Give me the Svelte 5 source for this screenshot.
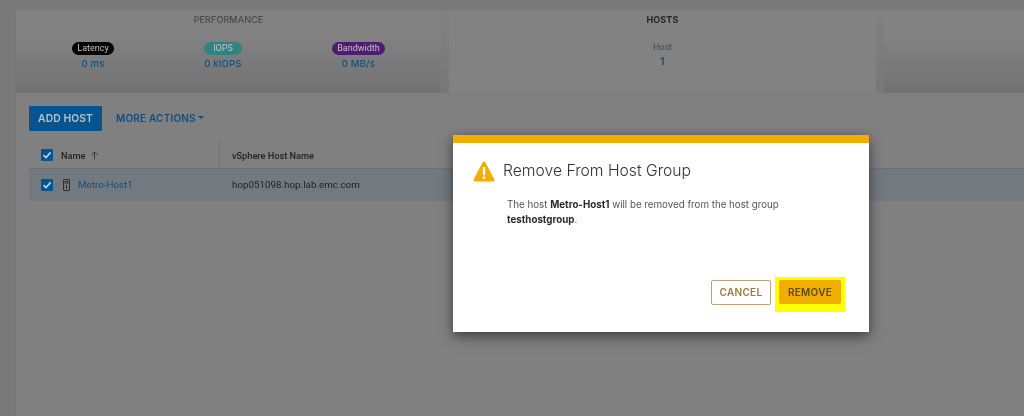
<script>
  const metrics = [
    { label: 'Latency', value: '0 ms', tone: 'black' },
    { label: 'IOPS', value: '0 kIOPS', tone: 'teal' },
    { label: 'Bandwidth', value: '0 MB/s', tone: 'purple' }
  ];
</script>

<div class="page">
  <div class="main">
    <div class="cards">
      <section class="card perf">
        <h3>PERFORMANCE</h3>
        <div class="metrics">
          {#each metrics as m}
            <div class="metric">
              <span class="pill {m.tone}">{m.label}</span>
              <span class="val">{m.value}</span>
            </div>
          {/each}
        </div>
      </section>
      <section class="card hosts">
        <h3>HOSTS</h3>
        <div class="host-stat">
          <span class="stat-label">Host</span>
          <span class="stat-val">1</span>
        </div>
      </section>
      <section class="card third"></section>
    </div>

    <div class="actions">
      <button class="primary">ADD HOST</button>
      <button class="link">MORE ACTIONS<span class="caret"></span></button>
    </div>

    <div class="table">
      <div class="thead">
        <div class="col-a">
          <span class="check"><svg viewBox="0 0 12 12"><path d="M2.5 6.2 5 8.6 9.6 3.4" /></svg></span>
          <span class="hname">Name</span>
          <svg class="arrow" viewBox="0 0 10 10"><path d="M5 9.5V1M1.2 4.8 5 1l3.8 3.8" /></svg>
        </div>
        <div class="col-b"><span>vSphere Host Name</span></div>
      </div>
      <div class="trow">
        <div class="col-a">
          <span class="check"><svg viewBox="0 0 12 12"><path d="M2.5 6.2 5 8.6 9.6 3.4" /></svg></span>
          <svg class="host-icon" viewBox="0 0 7 12"><rect x="0.5" y="0.5" width="6" height="11" rx="0.5" /><path d="M1.5 2.5h4M1.5 4h4M3.5 6v4" /></svg>
          <span class="host-link">Metro-Host1</span>
        </div>
        <div class="col-b plain">hop051098.hop.lab.emc.com</div>
      </div>
    </div>
  </div>

  <div class="modal">
    <div class="modal-top"></div>
    <div class="modal-head">
      <svg class="warn" viewBox="0 0 24 24">
        <path class="tri" d="M12 1.5c.6 0 1 .3 1.3.8l10 19c.5 1-.1 2.2-1.3 2.2H2c-1.2 0-1.8-1.2-1.3-2.2l10-19c.3-.5.7-.8 1.3-.8z" />
        <rect class="mark" x="10.7" y="7.5" width="2.6" height="9" rx="0.6" />
        <circle class="mark" cx="12" cy="19.2" r="1.5" />
      </svg>
      <h2>Remove From Host Group</h2>
    </div>
    <p>The host <b>Metro-Host1</b> will be removed from the host group <b>testhostgroup</b>.</p>
    <div class="modal-foot">
      <button class="cancel">CANCEL</button>
      <div class="highlight"><button class="remove">REMOVE</button></div>
    </div>
  </div>
</div>

<style>
  :global(body) { margin: 0; background: #797979; }
  .page {
    position: relative;
    width: 1024px;
    height: 416px;
    overflow: hidden;
    background: #797979;
    padding: 10px 0 0 15px;
    box-sizing: border-box;
    font-family: Roboto, "Liberation Sans", sans-serif;
  }
  .main {
    background: #808080;
    height: 406px;
    border-left: 1px solid #767676;
    box-sizing: border-box;
    filter: blur(0.4px);
  }
  .cards { display: flex; gap: 8px; height: 83px; background: linear-gradient(#808080, #787878); }
  .card { background: linear-gradient(#828282 30%, #727272); text-align: center; box-sizing: border-box; }
  .perf { width: 425px; }
  .hosts { width: 427px; background: #828282; }
  .third { flex: 1; }
  h3 {
    margin: 0;
    padding-top: 5px;
    font: 500 9px/10px Inter, sans-serif;
    letter-spacing: 0.1px;
    color: #484848;
  }
  .hosts h3 { color: #262626; font-weight: 700; }
  .metrics { display: flex; justify-content: center; gap: 90px; padding-top: 17px; }
  .metric { display: flex; flex-direction: column; align-items: stretch; text-align: center; }
  .pill {
    height: 13px;
    padding: 0 5.5px;
    border-radius: 7px;
    font: 400 9px/13px Roboto, sans-serif;
    color: #c4c4c4;
  }
  .black { background: #000; }
  .teal { background: #2f8480; }
  .purple { background: #4f1c72; }
  .val { margin-top: 3px; font: 500 9.5px/12px Inter, sans-serif; color: #0c4f84; letter-spacing: 0.2px; }
  .host-stat { display: flex; flex-direction: column; align-items: center; padding-top: 16px; }
  .stat-label { font: 400 9px/13px Roboto, sans-serif; color: #484848; }
  .stat-val { margin-top: 2px; font: 700 10px/12px Roboto, sans-serif; color: #0c4f84; }

  .actions { display: flex; align-items: center; gap: 14px; padding: 13px 0 0 13px; }
  button { border: 0; padding: 0; cursor: pointer; font-family: Inter, sans-serif; }
  .primary {
    width: 73px;
    height: 25px;
    padding-bottom: 2px;
    border-radius: 1px;
    background: #03548f;
    color: #b8c2cb;
    font-size: 10.3px;
    font-weight: 600;
    letter-spacing: 0.1px;
  }
  .link {
    background: none;
    color: #0c4f84;
    font-size: 10px;
    font-weight: 600;
    letter-spacing: 0.2px;
    display: flex;
    align-items: center;
    gap: 2px;
    padding-bottom: 2px;
  }
  .caret { border: 3.5px solid transparent; border-top: 3.5px solid #0c4f84; border-bottom: 0; }

  .table { margin: 11px 0 0 13px; font-size: 9.2px; }
  .thead, .trow { display: flex; }
  .thead { height: 26px; border-bottom: 1px solid #6a7279; color: #222; font-weight: 500; align-items: center; }
  .trow { height: 32px; background: #727a80; border-bottom: 1px solid #787878; color: #222; align-items: center; box-sizing: border-box; }
  .col-a { width: 190px; display: flex; align-items: center; padding-left: 12px; box-sizing: border-box; height: 100%; }
  .thead .col-b { height: 100%; border-left: 1px solid #727272; padding-left: 12px; display: flex; align-items: center; }
  .plain { padding-left: 13px; font-size: 9.8px; }
  .check { width: 12px; height: 12px; background: #03548f; border-radius: 1px; display: block; }
  .check svg { display: block; width: 12px; height: 12px; fill: none; stroke: #c8d2da; stroke-width: 1.6; }
  .hname { margin-left: 8px; }
  .arrow { width: 9px; height: 9px; margin-left: 5px; fill: none; stroke: #333; stroke-width: 1; }
  .host-icon { width: 7px; height: 12px; margin-left: 10px; fill: none; stroke: #2e2e2e; stroke-width: 1; }
  .host-link { margin-left: 8px; color: #0c4f84; font-size: 9.8px; }

  .modal {
    position: absolute;
    left: 453px;
    top: 135px;
    width: 416px;
    height: 197px;
    background: #fff;
    box-shadow: 0 4px 12px rgba(0, 0, 0, 0.55);
    display: flex;
    flex-direction: column;
    font-family: Inter, sans-serif;
    filter: blur(0.3px);
  }
  .modal-top { height: 8px; background: #f2ae00; }
  .modal-head { display: flex; align-items: center; gap: 8px; padding: 15px 0 0 20px; }
  .warn { width: 22px; height: 24px; }
  .tri { fill: #f2ae00; }
  .mark { fill: #fff; }
  h2 { margin: 0; padding-top: 1px; font: 300 15.7px/24px Inter, sans-serif; color: #333; }
  p { margin: 14px 40px 0 54px; font-size: 9.75px; line-height: 15px; color: #555; }
  p b { color: #2a2a2a; font-weight: 700; }
  .modal-foot { margin-top: auto; display: flex; align-items: flex-start; justify-content: flex-end; gap: 4px; padding: 0 24px 20px 0; }
  .cancel {
    width: 60px;
    height: 25px;
    margin-top: 3px;
    padding-bottom: 2px;
    background: #fff;
    border: 1px solid #bfa27a;
    border-radius: 2px;
    color: #9a7b45;
    font-size: 10px;
    font-weight: 600;
    letter-spacing: 0.3px;
  }
  .highlight { background: #ffff00; padding: 3px 4px 8px; display: flex; }
  .remove {
    width: 62px;
    height: 24px;
    background: #f2ae00;
    border-radius: 2px;
    color: #60491a;
    font-size: 10px;
    font-weight: 600;
    letter-spacing: 0.3px;
  }
</style>
